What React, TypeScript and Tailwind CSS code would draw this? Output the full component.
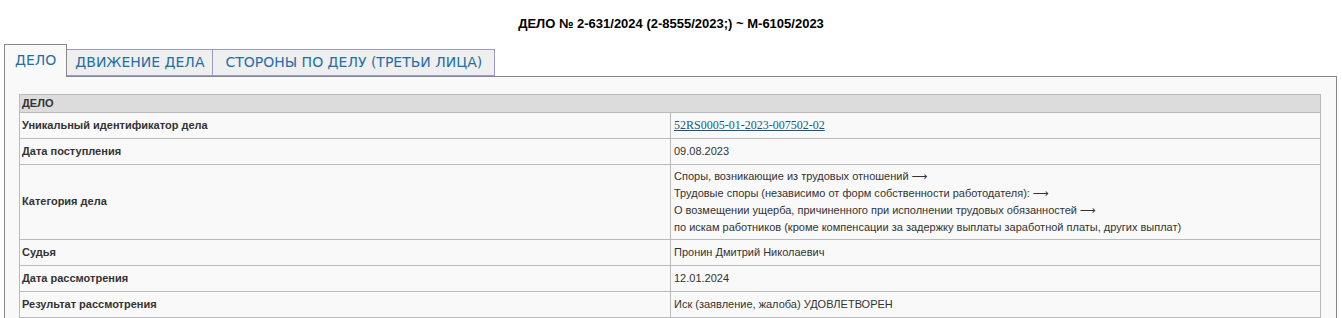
import React from 'react';

const Arrow = () => <span className="font-['DejaVu_Sans',sans-serif] text-[11px]">⟶</span>;

const rows: { label: string; value: React.ReactNode; tall?: boolean }[] = [
  {
    label: 'Уникальный идентификатор дела',
    value: (
      <a href="#" className="font-['Liberation_Serif',serif] text-[12px] text-[#15598a] underline">
        52RS0005-01-2023-007502-02
      </a>
    ),
  },
  { label: 'Дата поступления', value: '09.08.2023' },
  {
    label: 'Категория дела',
    tall: true,
    value: (
      <div className="leading-[17px]">
        <div>Споры, возникающие из трудовых отношений <Arrow /></div>
        <div>Трудовые споры (независимо от форм собственности работодателя): <Arrow /></div>
        <div>О возмещении ущерба, причиненного при исполнении трудовых обязанностей <Arrow /></div>
        <div>по искам работников (кроме компенсации за задержку выплаты заработной платы, других выплат)</div>
      </div>
    ),
  },
  { label: 'Судья', value: 'Пронин Дмитрий Николаевич' },
  { label: 'Дата рассмотрения', value: '12.01.2024' },
  { label: 'Результат рассмотрения', value: 'Иск (заявление, жалоба) УДОВЛЕТВОРЕН' },
];

export default function App() {
  return (
    <div className="min-h-screen bg-white font-['Liberation_Sans',Arial,sans-serif] text-[#333]">
      {/* Title */}
      <div className="h-[44px] pt-[14px] text-center text-[13px] font-bold text-black">
        ДЕЛО № 2-631/2024 (2-8555/2023;) ~ М-6105/2023
      </div>

      {/* Tabs */}
      <div className="ml-[4px] flex items-end font-['DejaVu_Sans',Verdana,sans-serif] text-[14px] text-[#1f6ea6]">
        <div className="relative z-10 -mb-px flex h-[33px] items-center border border-b-0 border-[#888] bg-[#f9f9f9] px-[10px] pb-[2px]">
          ДЕЛО
        </div>
        <div className="flex h-[27px] items-center border border-l-0 border-[#9b98cc] bg-[#efefef] px-[8px]">
          ДВИЖЕНИЕ ДЕЛА
        </div>
        <div className="flex h-[27px] items-center border border-l-0 border-[#9b98cc] bg-[#efefef] px-[12px]">
          СТОРОНЫ ПО ДЕЛУ (ТРЕТЬИ ЛИЦА)
        </div>
      </div>

      {/* Panel */}
      <div className="ml-[4px] mr-[5px] border border-[#888] bg-[#f9f9f9] pl-[14px] pr-[15px] pt-[17px] pb-[20px]">
        <table className="w-full border-collapse text-[11px]">
          <thead>
            <tr>
              <th colSpan={2} className="h-[16px] border border-[#bbb] bg-[#dcdcdc] px-[2px] text-left font-bold text-[#333]">
                ДЕЛО
              </th>
            </tr>
          </thead>
          <tbody>
            {rows.map((r) => (
              <tr key={r.label}>
                <td className={`w-[651px] border border-[#bbb] px-[2px] font-bold ${r.tall ? 'h-[75px]' : 'h-[26px]'}`}>
                  {r.label}
                </td>
                <td className={`border border-[#bbb] px-[3px] ${r.tall ? 'py-[3px]' : ''}`}>{r.value}</td>
              </tr>
            ))}
          </tbody>
        </table>
      </div>
    </div>
  );
}
